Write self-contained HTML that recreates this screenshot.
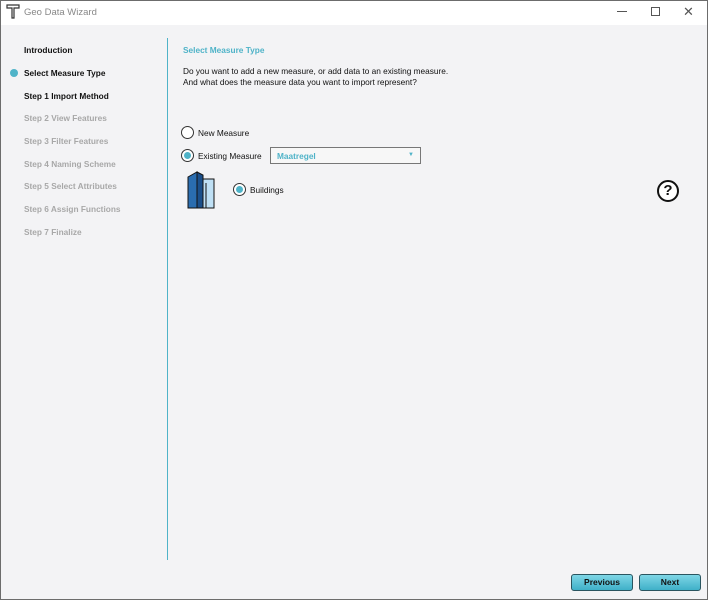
<!DOCTYPE html>
<html><head><style>
*{margin:0;padding:0;box-sizing:border-box}
body{width:708px;height:600px;background:#f3f3f5;font-family:"Liberation Sans",Arial,sans-serif;font-size:8.3px;color:#111;position:relative;overflow:hidden}
#frame{position:absolute;left:0;top:0;width:708px;height:600px;border:1px solid #6c6c6c;pointer-events:none}
.t{position:absolute;white-space:nowrap}
#title{position:absolute;left:0;top:0;width:708px;height:25px;background:#fff}
.side{font-weight:bold;left:24px}
.dim{color:#a8a8a8}
.radio{position:absolute;width:13px;height:13px;border-radius:50%;border:1px solid #333;background:#fff}
.radio.on::after{content:"";position:absolute;left:2px;top:2px;width:7px;height:7px;border-radius:50%;background:#4fb3c8}
.btn{position:absolute;top:574px;height:17px;width:62px;border:1px solid #2a5560;border-radius:3px;background:linear-gradient(#7fd6e6,#3fb0c8);font-weight:bold;text-align:center;line-height:15px;font-size:8.5px}
</style></head><body>
<div id="title">
<svg style="position:absolute;left:6px;top:4px" width="14" height="15" viewBox="0 0 14 15"><path d="M1 1h12v3H8v10H6V4H1z" fill="none" stroke="#333" stroke-width="1.2"/></svg>
<div class="t" style="left:24px;top:7px;font-size:9.5px;color:#888">Geo Data Wizard</div>
<div class="t" style="left:617px;top:11px;width:10px;height:1px;background:#555"></div>
<div class="t" style="left:651px;top:7px;width:9px;height:9px;border:1px solid #555"></div>
<div class="t" style="left:683px;top:4px;font-size:13px;color:#555">✕</div>
</div>
<div class="t" style="left:167px;top:38px;width:1px;height:522px;background:#4fb3c8"></div>
<div class="t side" style="top:45px">Introduction</div>
<div class="t" style="left:10px;top:69px;width:8px;height:8px;border-radius:50%;background:#4fb3c8"></div>
<div class="t side" style="top:68px">Select Measure Type</div>
<div class="t side" style="top:91px">Step 1 Import Method</div>
<div class="t side dim" style="top:113px">Step 2 View Features</div>
<div class="t side dim" style="top:136px">Step 3 Filter Features</div>
<div class="t side dim" style="top:159px">Step 4 Naming Scheme</div>
<div class="t side dim" style="top:181px">Step 5 Select Attributes</div>
<div class="t side dim" style="top:204px">Step 6 Assign Functions</div>
<div class="t side dim" style="top:227px">Step 7 Finalize</div>
<div class="t" style="left:183px;top:45px;font-weight:bold;color:#4fb3c8">Select Measure Type</div>
<div class="t" style="left:183px;top:66px;line-height:11px">Do you want to add a new measure, or add data to an existing measure.<br>And what does the measure data you want to import represent?</div>
<div class="radio" style="left:181px;top:126px"></div>
<div class="t" style="left:198px;top:128px">New Measure</div>
<div class="radio on" style="left:181px;top:149px"></div>
<div class="t" style="left:198px;top:151px">Existing Measure</div>
<div class="t" style="left:270px;top:147px;width:151px;height:17px;border:1px solid #777;background:#f7f7f7"></div>
<div class="t" style="left:277px;top:151px;color:#4fb3c8;font-weight:bold">Maatregel</div>
<div class="t" style="left:408px;top:152px;color:#4fb3c8;font-size:6px">▼</div>
<svg style="position:absolute;left:187px;top:171px" width="28" height="38" viewBox="0 0 28 38"><path d="M1 6L10 1V37H1Z" fill="#2a6db0" stroke="#111"/><path d="M10 1L16 4V37H10Z" fill="#1b4f8a" stroke="#111"/><path d="M16 8H27V37H16Z" fill="#bfe0f5" stroke="#111"/><path d="M19 12V37" stroke="#111"/></svg>
<div class="radio on" style="left:233px;top:183px"></div>
<div class="t" style="left:250px;top:185px">Buildings</div>
<div class="t" style="left:657px;top:180px;width:22px;height:22px;border:2px solid #111;border-radius:50%;text-align:center;font-weight:bold;font-size:15px;line-height:18px;background:#fff">?</div>
<div class="btn" style="left:571px">Previous</div>
<div class="btn" style="left:639px">Next</div>
<div id="frame"></div>
</body></html>
